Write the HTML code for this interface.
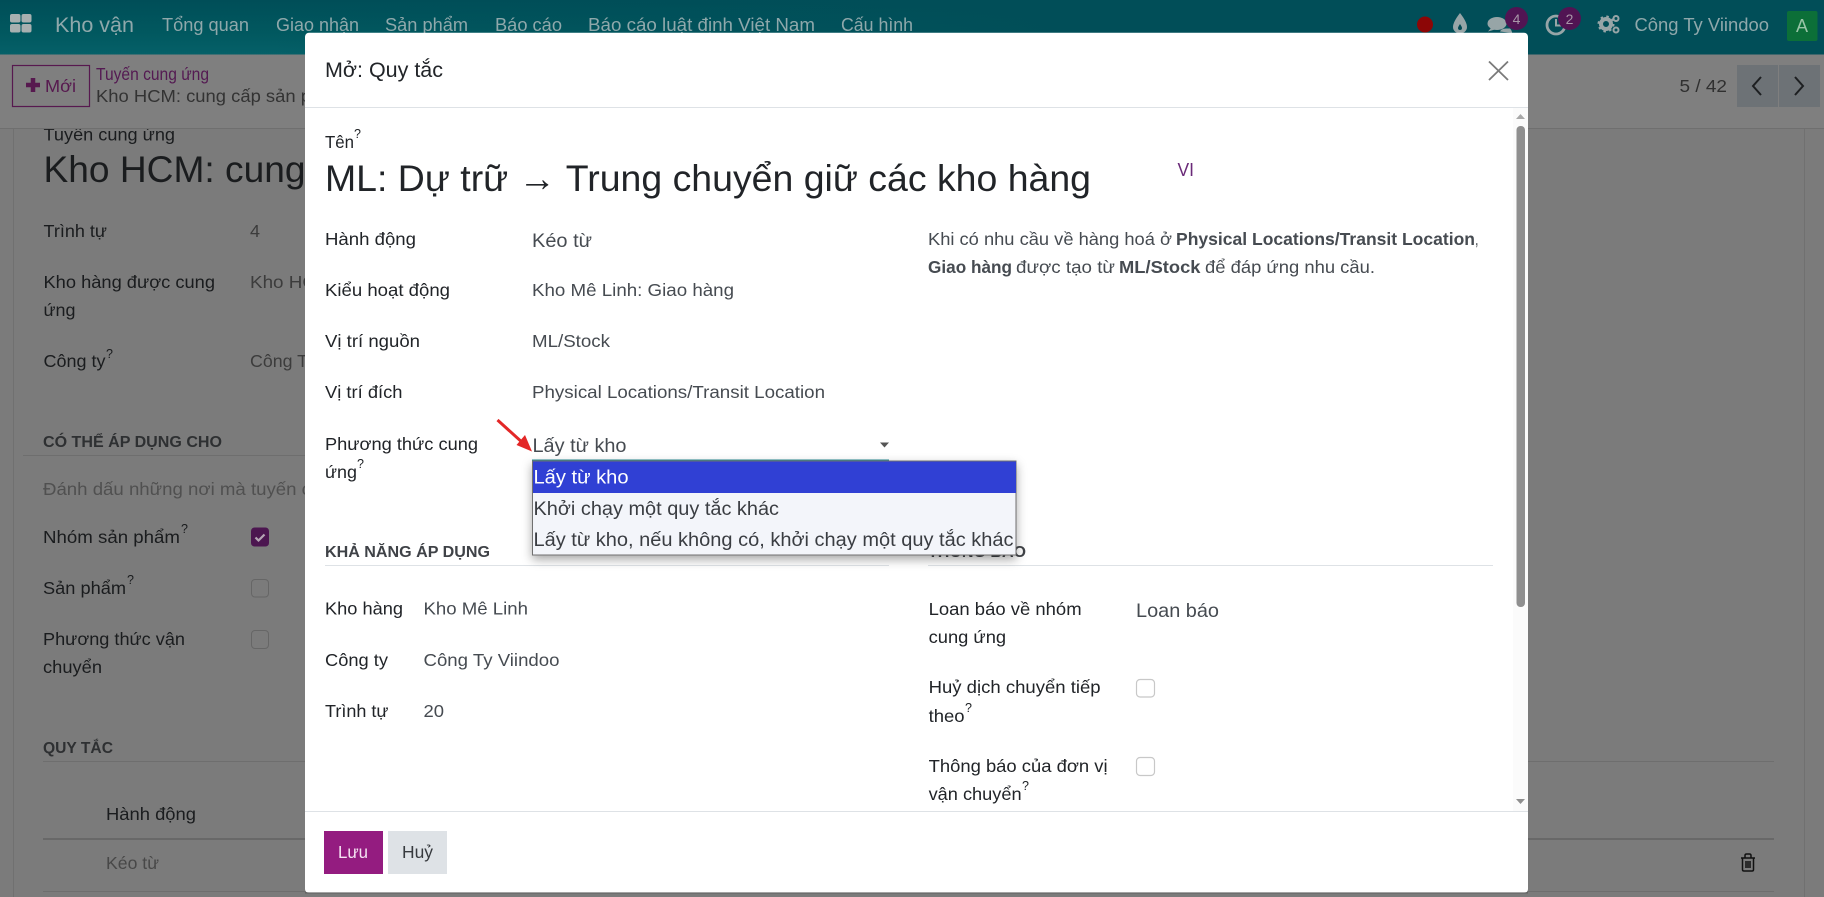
<!DOCTYPE html>
<html lang="vi"><head><meta charset="utf-8"><title>Mở: Quy tắc</title>
<style>
html,body{margin:0;padding:0;width:1824px;height:897px;overflow:hidden;background:#7b7b7b}
svg{display:block}
text{font-family:"Liberation Sans","Noto Sans CJK SC",sans-serif;font-size:17.5px;fill:#1f2226;white-space:pre}
.d text{fill:#1a1c1e}
.n text{fill:#8fa8ab;font-size:18px}
.m text{fill:#212428}
.v{fill:#464b51 !important}
.b{font-weight:bold}
.q{font-size:12.5px !important}
</style></head><body>
<svg width="1824" height="897" viewBox="0 0 1824 897" xmlns="http://www.w3.org/2000/svg">
<defs>
<linearGradient id="nav" x1="0" x2="0" y1="0" y2="1"><stop offset="0" stop-color="#004e58"/><stop offset=".6" stop-color="#01585f"/><stop offset="1" stop-color="#056068"/></linearGradient>
<linearGradient id="navr" x1="0" x2="1" y1="0" y2="0"><stop offset=".15" stop-color="#014e58" stop-opacity="0"/><stop offset=".6" stop-color="#014e58" stop-opacity="1"/></linearGradient>
<filter id="sh" x="-5%" y="-10%" width="110%" height="130%"><feDropShadow dx="0" dy="4" stdDeviation="5" flood-color="#000" flood-opacity=".35"/></filter>
</defs>
<rect width="1824" height="897" fill="#7b7b7b"/>

<!-- background sheet -->
<g class="d">
<rect x="13" y="128" width="1" height="769" fill="#707070"/>
<rect x="1804" y="128" width="1" height="769" fill="#707070"/>
<text x="43.5" y="140.5" textLength="131.5" lengthAdjust="spacingAndGlyphs">Tuyến cung ứng</text>
<text x="43.5" y="182" style="font-size:37px" textLength="262" lengthAdjust="spacingAndGlyphs">Kho HCM: cung</text>
<text x="43.5" y="237" textLength="63.5" lengthAdjust="spacingAndGlyphs">Trình tự</text>
<text x="250" y="237" style="fill:#3c3c3c" textLength="10" lengthAdjust="spacingAndGlyphs">4</text>
<text x="43.5" y="288" textLength="171.5" lengthAdjust="spacingAndGlyphs">Kho hàng được cung</text>
<text x="43.5" y="316" textLength="32" lengthAdjust="spacingAndGlyphs">ứng</text>
<text x="250" y="288" style="fill:#3c3c3c" textLength="66" lengthAdjust="spacingAndGlyphs">Kho HC</text>
<text x="43.5" y="367" textLength="62" lengthAdjust="spacingAndGlyphs">Công ty</text>
<text x="106" y="358" class="q">?</text>
<text x="250" y="367" style="fill:#3c3c3c" textLength="58" lengthAdjust="spacingAndGlyphs">Công T</text>
<text x="43" y="447" class="b" style="font-size:16px;fill:#2e3032" textLength="179" lengthAdjust="spacingAndGlyphs">CÓ THỂ ÁP DỤNG CHO</text>
<rect x="23" y="455" width="290" height="1" fill="#6e6e6e"/>
<text x="43" y="495" style="fill:#505050" textLength="268" lengthAdjust="spacingAndGlyphs">Đánh dấu những nơi mà tuyến c</text>
<text x="43" y="543" textLength="137" lengthAdjust="spacingAndGlyphs">Nhóm sản phẩm</text>
<text x="181" y="533" class="q">?</text>
<rect x="251" y="527.5" width="18" height="19" rx="3.5" fill="#4c1650"/>
<path d="M255.5 537.5l3 3 6-6" fill="none" stroke="#b5a5b5" stroke-width="2.2"/>
<text x="43" y="594" textLength="83" lengthAdjust="spacingAndGlyphs">Sản phẩm</text>
<text x="127" y="584" class="q">?</text>
<rect x="251.5" y="579.5" width="17" height="17.5" rx="3.5" fill="none" stroke="#666" stroke-width="1"/>
<text x="43" y="645" textLength="142" lengthAdjust="spacingAndGlyphs">Phương thức vận</text>
<text x="43" y="673" textLength="59" lengthAdjust="spacingAndGlyphs">chuyển</text>
<rect x="251.5" y="630.5" width="17" height="18" rx="3.5" fill="none" stroke="#666" stroke-width="1"/>
<text x="43" y="753" class="b" style="font-size:16px;fill:#2e3032" textLength="70" lengthAdjust="spacingAndGlyphs">QUY TẮC</text>
<rect x="43" y="761" width="1731" height="1" fill="#6e6e6e"/>
<text x="106" y="820" textLength="90" lengthAdjust="spacingAndGlyphs">Hành động</text>
<rect x="43" y="838" width="1731" height="2" fill="#686868"/>
<text x="106" y="869" style="fill:#484848" textLength="53" lengthAdjust="spacingAndGlyphs">Kéo từ</text>
<rect x="43" y="891" width="1731" height="1" fill="#6e6e6e"/>
<path d="M1741 858h14M1745 858v-2.5q0-1.500 1.500-1.500h3q1.500 0 1.500 1.500v2.500M1742.500 858v11.500q0 1.500 1.500 1.500h8q1.500 0 1.500-1.500v-11.500M1746 861v7M1748 861v7M1750 861v7" fill="none" stroke="#111" stroke-width="1.500"/>
</g>

<!-- control panel -->
<rect x="0" y="54" width="1824" height="74" fill="#7f7f7f"/>
<rect x="0" y="128" width="1824" height="1" fill="#6f6f6f"/>
<rect x="12.500" y="65.500" width="77" height="41" fill="none" stroke="#57194f" stroke-width="1.200"/>
<path d="M33 78v14M26 85h14" stroke="#57194f" stroke-width="4.500"/>
<text x="45" y="92" style="fill:#57194f" textLength="31" lengthAdjust="spacingAndGlyphs">Mới</text>
<text x="96" y="80" style="fill:#541a52" textLength="113" lengthAdjust="spacingAndGlyphs">Tuyến cung ứng</text>
<text x="96" y="102" style="fill:#333" textLength="215" lengthAdjust="spacingAndGlyphs">Kho HCM: cung cấp sản p</text>
<text x="1679.500" y="92" style="fill:#303030" textLength="47.500" lengthAdjust="spacingAndGlyphs">5 / 42</text>
<rect x="1737" y="65" width="41" height="42" fill="#6d7276"/>
<rect x="1779" y="65" width="41" height="42" fill="#6d7276"/>
<path d="M1761 77l-8 9 8 9" fill="none" stroke="#1d1f21" stroke-width="2"/>
<path d="M1795 77l8 9-8 9" fill="none" stroke="#1d1f21" stroke-width="2"/>

<!-- navbar -->
<rect width="1824" height="54.500" fill="url(#nav)"/>
<rect width="1824" height="54.500" fill="url(#navr)"/>
<rect x="10" y="14" width="10.500" height="8.500" rx="2" fill="#a8b0b0"/><rect x="21.500" y="14" width="10" height="8.500" rx="2" fill="#a8b0b0"/>
<rect x="10" y="24" width="10.500" height="8.500" rx="2" fill="#a8b0b0"/><rect x="21.500" y="24" width="10" height="8.500" rx="2" fill="#a8b0b0"/>
<g class="n">
<text x="55" y="32" style="font-size:21px" textLength="79" lengthAdjust="spacingAndGlyphs">Kho vận</text>
<text x="162" y="31" textLength="87" lengthAdjust="spacingAndGlyphs">Tổng quan</text>
<text x="276" y="31" textLength="83" lengthAdjust="spacingAndGlyphs">Giao nhận</text>
<text x="385" y="31" textLength="83" lengthAdjust="spacingAndGlyphs">Sản phẩm</text>
<text x="495" y="31" textLength="67" lengthAdjust="spacingAndGlyphs">Báo cáo</text>
<text x="588" y="31" textLength="227" lengthAdjust="spacingAndGlyphs">Báo cáo luật định Việt Nam</text>
<text x="841" y="31" textLength="72" lengthAdjust="spacingAndGlyphs">Cấu hình</text>
<text x="1634.500" y="31" textLength="134.500" lengthAdjust="spacingAndGlyphs">Công Ty Viindoo</text>
</g>
<ellipse cx="1425" cy="24.500" rx="8" ry="8" fill="#8c0606"/>
<path d="M1460 13q-7 9-7 14a7 6.500 0 0 0 14 0q0-5-7-14z" fill="#97a5a7"/>
<path d="M1460 24q-2 3-2 4a2 2 0 0 0 4 0q0-1-2-4z" fill="#014a54"/>
<ellipse cx="1497" cy="23.500" rx="9.500" ry="6.500" fill="#97a5a7"/><path d="M1491 28l-3 3.500 7-2z" fill="#97a5a7"/><path d="M1500 31.500a6 3.500 0 0 1 6-3h4q2 2 2 4.500z" fill="#97a5a7"/>
<circle cx="1516.500" cy="18.500" r="11.500" fill="#511453"/>
<text x="1516.500" y="24" text-anchor="middle" style="font-size:14px;fill:#a896a8">4</text>
<circle cx="1556" cy="25" r="9" fill="none" stroke="#97a5a7" stroke-width="2.800"/><path d="M1556 19v6.500h5" fill="none" stroke="#97a5a7" stroke-width="2"/>
<circle cx="1569.500" cy="18.500" r="11.500" fill="#511453"/>
<text x="1569.500" y="24" text-anchor="middle" style="font-size:14px;fill:#a896a8">2</text>
<circle cx="1606" cy="24" r="5" fill="none" stroke="#97a5a7" stroke-width="4"/><circle cx="1606" cy="24" r="7.500" fill="none" stroke="#97a5a7" stroke-width="2" stroke-dasharray="2.500 3.400"/>
<circle cx="1616" cy="18.500" r="2.500" fill="none" stroke="#97a5a7" stroke-width="2"/><circle cx="1616" cy="30" r="2.500" fill="none" stroke="#97a5a7" stroke-width="2"/>
<rect x="1787" y="11" width="30.500" height="30" rx="2" fill="#0c6f38"/>
<text x="1802" y="32" text-anchor="middle" style="fill:#98c4a6;font-size:18px">A</text>

<!-- modal -->
<rect x="305" y="32.700" width="1223" height="860.300" rx="4" fill="#fff"/>
<rect x="305" y="892" width="1223" height="1.500" fill="#4a4a4a" opacity=".5"/>
<rect x="305" y="107" width="1223" height="1" fill="#dee2e6"/>
<rect x="305" y="811" width="1223" height="1" fill="#dee2e6"/>
<path d="M1489 61.500l19 18.500M1508 61.500l-19 18.500" stroke="#7a7a7a" stroke-width="1.800" fill="none"/>
<rect x="1513" y="108" width="15" height="703" fill="#fbfbfb"/>
<path d="M1516 119l4.500-5 4.500 5z" fill="#a8a8a8"/>
<rect x="1516.500" y="126" width="8.500" height="481" rx="4" fill="#8f8f8f"/>
<path d="M1516 799l4.500 5 4.500-5z" fill="#8f8f8f"/>

<g class="m">
<text x="325" y="77" style="font-size:21px" textLength="118" lengthAdjust="spacingAndGlyphs">Mở: Quy tắc</text>
<text x="325" y="148" textLength="29" lengthAdjust="spacingAndGlyphs">Tên</text>
<text x="354" y="138" class="q">?</text>
<text x="325" y="191" style="font-size:37.500px" textLength="766" lengthAdjust="spacingAndGlyphs">ML: Dự trữ → Trung chuyển giữ các kho hàng</text>
<text x="1177.500" y="176" style="font-size:18px;fill:#6a2a78" textLength="16.500" lengthAdjust="spacingAndGlyphs">VI</text>

<text x="325" y="245" textLength="91" lengthAdjust="spacingAndGlyphs">Hành động</text>
<text x="532" y="247" class="v" style="font-size:19px" textLength="60" lengthAdjust="spacingAndGlyphs">Kéo từ</text>
<text x="325" y="296" textLength="125" lengthAdjust="spacingAndGlyphs">Kiểu hoạt động</text>
<text x="532" y="296" class="v" textLength="202" lengthAdjust="spacingAndGlyphs">Kho Mê Linh: Giao hàng</text>
<text x="325" y="347" textLength="95" lengthAdjust="spacingAndGlyphs">Vị trí nguồn</text>
<text x="532" y="347" class="v" textLength="78" lengthAdjust="spacingAndGlyphs">ML/Stock</text>
<text x="325" y="398" textLength="77.500" lengthAdjust="spacingAndGlyphs">Vị trí đích</text>
<text x="532" y="398" class="v" textLength="293" lengthAdjust="spacingAndGlyphs">Physical Locations/Transit Location</text>

<text x="325" y="450" textLength="153" lengthAdjust="spacingAndGlyphs">Phương thức cung</text>
<text x="325" y="478" textLength="32" lengthAdjust="spacingAndGlyphs">ứng</text>
<text x="357" y="468" class="q">?</text>
<text x="532.500" y="452" class="v" style="font-size:19px" textLength="94" lengthAdjust="spacingAndGlyphs">Lấy từ kho</text>
<path d="M880 442.500h9l-4.500 5z" fill="#555"/>
<path d="M497.500 420L524 444" stroke="#e32727" stroke-width="3" fill="none"/><path d="M532 451.500l-15.500-6.500 8.500-10z" fill="#e32727"/>
<rect x="532" y="459.500" width="357" height="2" fill="#2a8e96"/>

<text x="928" y="245" class="v" textLength="244" lengthAdjust="spacingAndGlyphs">Khi có nhu cầu về hàng hoá ở</text>
<text x="1176" y="245" class="v b" textLength="299" lengthAdjust="spacingAndGlyphs">Physical Locations/Transit Location</text>
<text x="1475" y="245" class="v" textLength="3.500" lengthAdjust="spacingAndGlyphs">,</text>
<text x="928" y="273" class="v b" textLength="84" lengthAdjust="spacingAndGlyphs">Giao hàng</text>
<text x="1016" y="273" class="v" textLength="99" lengthAdjust="spacingAndGlyphs">được tạo từ</text>
<text x="1119" y="273" class="v b" textLength="81.500" lengthAdjust="spacingAndGlyphs">ML/Stock</text>
<text x="1205" y="273" class="v" textLength="170" lengthAdjust="spacingAndGlyphs">để đáp ứng nhu cầu.</text>

<text x="325" y="557" class="b" style="font-size:16px;fill:#3f4247" textLength="165" lengthAdjust="spacingAndGlyphs">KHẢ NĂNG ÁP DỤNG</text>
<rect x="325" y="565" width="564" height="1" fill="#dee2e6"/>
<text x="928" y="557" class="b" style="font-size:16px;fill:#3f4247" textLength="98" lengthAdjust="spacingAndGlyphs">THÔNG BÁO</text>
<rect x="928" y="565" width="565" height="1" fill="#dee2e6"/>

<text x="325" y="614.500" textLength="78" lengthAdjust="spacingAndGlyphs">Kho hàng</text>
<text x="423.500" y="614.500" class="v" textLength="104.500" lengthAdjust="spacingAndGlyphs">Kho Mê Linh</text>
<text x="325" y="666" textLength="63" lengthAdjust="spacingAndGlyphs">Công ty</text>
<text x="423.500" y="666" class="v" textLength="136" lengthAdjust="spacingAndGlyphs">Công Ty Viindoo</text>
<text x="325" y="717" textLength="63.500" lengthAdjust="spacingAndGlyphs">Trình tự</text>
<text x="423.500" y="717" class="v" textLength="20.500" lengthAdjust="spacingAndGlyphs">20</text>

<text x="928.600" y="615" textLength="153" lengthAdjust="spacingAndGlyphs">Loan báo về nhóm</text>
<text x="928.600" y="643" textLength="77.500" lengthAdjust="spacingAndGlyphs">cung ứng</text>
<text x="1136" y="617" class="v" style="font-size:19.500px" textLength="83" lengthAdjust="spacingAndGlyphs">Loan báo</text>
<text x="928.600" y="693" textLength="172" lengthAdjust="spacingAndGlyphs">Huỷ dịch chuyển tiếp</text>
<text x="928.600" y="722" textLength="36" lengthAdjust="spacingAndGlyphs">theo</text>
<text x="965" y="712" class="q">?</text>
<rect x="1136.500" y="679.500" width="18" height="17.500" rx="3.500" fill="none" stroke="#c8c8c8" stroke-width="1.200"/>
<text x="928.600" y="772" textLength="179" lengthAdjust="spacingAndGlyphs">Thông báo của đơn vị</text>
<text x="928.600" y="800" textLength="93" lengthAdjust="spacingAndGlyphs">vận chuyển</text>
<text x="1022" y="790" class="q">?</text>
<rect x="1136.500" y="757.500" width="18" height="18" rx="3.500" fill="none" stroke="#c8c8c8" stroke-width="1.200"/>
</g>

<!-- footer buttons -->
<rect x="324" y="831" width="59" height="43" fill="#941c80"/>
<text x="338" y="858" style="fill:#f5e3f2" textLength="30" lengthAdjust="spacingAndGlyphs">Lưu</text>
<rect x="388" y="831" width="59" height="43" fill="#dee2e6"/>
<text x="402" y="858" style="fill:#373a3e" textLength="31" lengthAdjust="spacingAndGlyphs">Huỷ</text>

<!-- dropdown -->
<rect x="532.500" y="461" width="483.500" height="94" fill="#f3f5fa" stroke="#6f6f6f" stroke-width="1" filter="url(#sh)"/>
<rect x="533" y="461.500" width="483" height="31.500" fill="#3040d4"/>
<text x="533.500" y="483.500" style="fill:#fff;font-size:19px" textLength="95" lengthAdjust="spacingAndGlyphs">Lấy từ kho</text>
<text x="533.500" y="515" style="fill:#3a3d42;font-size:19px" textLength="245.500" lengthAdjust="spacingAndGlyphs">Khởi chạy một quy tắc khác</text>
<text x="533.500" y="546" style="fill:#3a3d42;font-size:19px" textLength="480" lengthAdjust="spacingAndGlyphs">Lấy từ kho, nếu không có, khởi chạy một quy tắc khác</text>
</svg>
</body></html>
